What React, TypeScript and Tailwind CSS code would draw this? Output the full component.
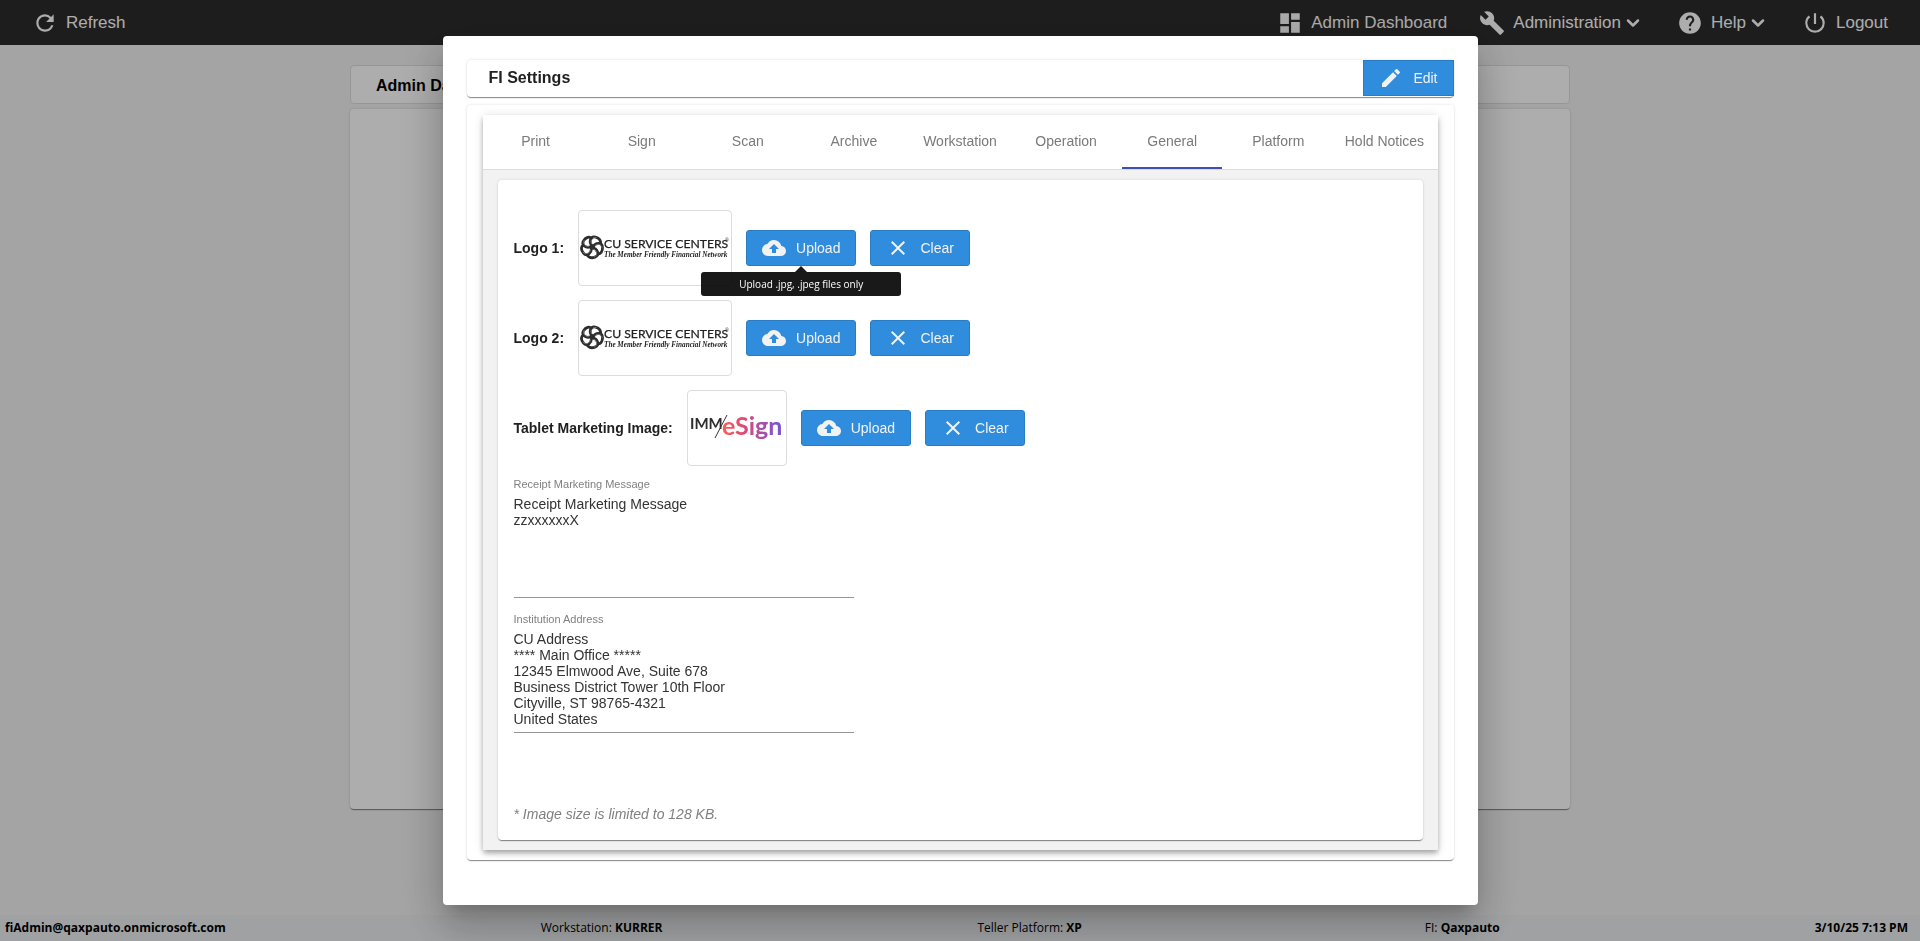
import { ChevronDown } from 'lucide-react';
import { useState } from 'react';
import type { ReactNode } from 'react';
import type { IconType } from 'react-icons';
import {
  MdBuild,
  MdClose,
  MdCloudUpload,
  MdDashboard,
  MdEdit,
  MdHelp,
  MdPowerSettingsNew,
  MdRefresh
} from 'react-icons/md';

const tabs = [
  'Print',
  'Sign',
  'Scan',
  'Archive',
  'Workstation',
  'Operation',
  'General',
  'Platform',
  'Hold Notices'
];

const navItems = [
  { icon: MdDashboard, label: 'Admin Dashboard', menu: false },
  { icon: MdBuild, label: 'Administration', menu: true },
  { icon: MdHelp, label: 'Help', menu: true },
  { icon: MdPowerSettingsNew, label: 'Logout', menu: false }
];

const receiptMessage = 'Receipt Marketing Message\nzzxxxxxxX';

const institutionAddress = [
  'CU Address',
  '**** Main Office *****',
  '12345 Elmwood Ave, Suite 678',
  'Business District Tower 10th Floor',
  'Cityville, ST 98765-4321',
  'United States'
].join('\n');

const cardShadow =
  'shadow-[0_2px_1px_-1px_rgba(0,0,0,0.3),0_1px_1px_0_rgba(0,0,0,0.2),0_0_3px_0_rgba(0,0,0,0.12)]';

function CuServiceLogo() {
  return (
    <svg width="150" height="30" viewBox="0 0 150 30" role="img" aria-label="CU Service Centers">
      <g transform="translate(12 14)" fill="none" strokeLinecap="round">
        {[20, 92, 164, 236, 308].map((angle) => (
          <g key={angle} transform={`rotate(${angle})`}>
            <path d="M0 -1 C-5 -3 -5.500 -10 0 -10.500 C4 -11 7 -8.500 6.500 -6" stroke="#2d2d2d" strokeWidth="2.800" />
            <path d="M-1.500 -3 C-4 -5 -3.500 -9.500 0.500 -10.300" stroke="#9a9a9a" strokeWidth="0.600" />
          </g>
        ))}
      </g>
      <text x="24" y="15" fontFamily="Lato, sans-serif" fontSize="12.200" fill="#222" stroke="#222" strokeWidth="0.250">
        CU SERVICE CENTERS
      </text>
      <text x="145" y="9" fontFamily="'Liberation Sans', sans-serif" fontSize="5" fill="#333">
        ®
      </text>
      <text x="24" y="24" fontFamily="'Liberation Serif', serif" fontSize="7.200" fontStyle="italic" fontWeight="700" fill="#222">
        The Member Friendly Financial Network
      </text>
    </svg>
  );
}

function EsignLogo() {
  return (
    <svg width="96" height="40" viewBox="0 0 96 40" role="img" aria-label="IMM eSign">
      <defs>
        <linearGradient id="esign" gradientUnits="userSpaceOnUse" x1="34" y1="0" x2="94" y2="0">
          <stop offset="0" stopColor="#ff5a55" />
          <stop offset="0.35" stopColor="#dd4a78" />
          <stop offset="0.7" stopColor="#a24fae" />
          <stop offset="1" stopColor="#6f57d8" />
        </linearGradient>
      </defs>
      <text x="1" y="21" fontFamily="Lato, sans-serif" fontSize="15" fontWeight="700" fill="#2d2d2d">
        IMM
      </text>
      <path d="M26 30 L38 7" stroke="#333" strokeWidth="1" />
      <text x="33" y="27" fontFamily="Lato, sans-serif" fontSize="25" fontWeight="700" fill="url(#esign)">
        eSign
      </text>
    </svg>
  );
}

function ActionButton({ icon: Icon, label, square }: { icon: IconType; label: string; square?: boolean }) {
  return (
    <button
      type="button"
      className={`flex h-9 items-center gap-2.5 border border-[#2a7cc2] bg-[#308ddd] px-[15px] text-sm text-[#f2f2f2] hover:bg-[#2a7cc2] ${
        square ? '' : 'rounded-[3px]'
      }`}
    >
      <Icon size={24} />
      {label}
    </button>
  );
}

function ImageRow({ label, tooltip, children }: { label: string; tooltip?: string; children: ReactNode }) {
  return (
    <div className="flex items-center gap-3.5">
      <span className="text-sm font-bold">{label}</span>
      <div className="flex h-[76px] items-center justify-center rounded border border-[#dcdcdc] px-px">
        {children}
      </div>
      <div className="relative">
        <ActionButton icon={MdCloudUpload} label="Upload" />
        {tooltip && (
          <div
            role="tooltip"
            className="absolute top-full left-1/2 z-10 mt-1.5 flex h-6 w-[200px] -translate-x-1/2 items-center justify-center rounded-[3px] bg-black/90 font-['Open_Sans',sans-serif] text-[10px] text-white"
          >
            <span className="absolute bottom-full border-x-[6px] border-b-[6px] border-x-transparent border-b-black/90" />
            {tooltip}
          </div>
        )}
      </div>
      <ActionButton icon={MdClose} label="Clear" />
    </div>
  );
}

function MessageField({ id, label, value }: { id: string; label: string; value: string }) {
  return (
    <div className="flex w-[340px] max-w-full flex-col gap-1">
      <label htmlFor={id} className="text-[11px] leading-4 text-[#808080]">
        {label}
      </label>
      <textarea
        id={id}
        rows={6}
        readOnly
        defaultValue={value}
        className="box-content resize-none overflow-hidden border-b border-[#949494] pb-[5px] text-sm leading-4 text-[#333] outline-none"
      />
    </div>
  );
}

function TopBar() {
  return (
    <header className="flex h-[45px] items-center justify-between bg-[#2c2c2c] px-8 text-[17px] text-white">
      <a href="#refresh" className="flex items-center gap-2">
        <MdRefresh size={26} />
        Refresh
      </a>
      <nav className="flex items-center gap-8">
        {navItems.map(({ icon: Icon, label, menu }) => (
          <a key={label} href="#menu" className="flex items-center">
            <Icon size={26} className="mr-2" />
            {label}
            {menu && <ChevronDown size={20} strokeWidth={3} className="mr-0.5 ml-0.5" />}
          </a>
        ))}
      </nav>
    </header>
  );
}

function StatusBar() {
  return (
    <footer className="flex h-[26px] items-center justify-between bg-[#ebeef0] pr-3 pl-[5px] font-['Open_Sans',sans-serif] text-xs text-black">
      <b>fiAdmin@qaxpauto.onmicrosoft.com</b>
      <span>
        Workstation: <b>KURRER</b>
      </span>
      <span className="pr-7">
        Teller Platform: <b>XP</b>
      </span>
      <span>
        FI: <b>Qaxpauto</b>
      </span>
      <b>3/10/25 7:13 PM</b>
    </footer>
  );
}

function SettingsDialog() {
  const [activeTab, setActiveTab] = useState('General');

  return (
    <div
      role="dialog"
      aria-label="FI Settings"
      className="w-full max-w-[1035px] rounded bg-white px-6 pt-6 pb-[45px] text-[#212121] shadow-[0_11px_15px_-7px_rgba(0,0,0,0.2),0_24px_38px_3px_rgba(0,0,0,0.14),0_9px_46px_8px_rgba(0,0,0,0.12)]"
    >
      <div className={`flex items-start justify-between rounded pb-px pl-[22px] ${cardShadow}`}>
        <h2 className="text-base leading-9 font-bold">FI Settings</h2>
        <ActionButton icon={MdEdit} label="Edit" square />
      </div>

      <div className={`mt-2 rounded px-4 py-2.5 ${cardShadow}`}>
        <div className="bg-[#f2f2f2] shadow-[0_3px_5px_-1px_rgba(0,0,0,0.2),0_4px_5px_0_rgba(0,0,0,0.14),0_1px_10px_0_rgba(0,0,0,0.12)]">
          <div role="tablist" className="flex border-b border-[#dcdcdc] bg-white">
            {tabs.map((tab) => (
              <button
                key={tab}
                type="button"
                role="tab"
                aria-selected={activeTab === tab}
                onClick={() => setActiveTab(tab)}
                className="flex h-[54px] flex-1 basis-0 flex-col items-center px-[3px] text-sm whitespace-nowrap text-[#7a7a7a]"
              >
                <span className="flex flex-1 items-center">{tab}</span>
                <span className={`h-0.5 w-full ${activeTab === tab ? 'bg-[#3f51b5]' : 'bg-transparent'}`} />
              </button>
            ))}
          </div>

          <div className="px-[15px] py-2.5">
            <div className={`rounded bg-white px-4 pt-[30px] pb-4 ${cardShadow}`}>
              <div className="flex flex-col gap-3.5">
                <ImageRow label="Logo 1:" tooltip="Upload .jpg, .jpeg files only">
                  <CuServiceLogo />
                </ImageRow>
                <ImageRow label="Logo 2:">
                  <CuServiceLogo />
                </ImageRow>
                <ImageRow label="Tablet Marketing Image:">
                  <EsignLogo />
                </ImageRow>
              </div>

              <div className="mt-2.5 flex flex-col gap-[13px]">
                <MessageField id="receipt-message" label="Receipt Marketing Message" value={receiptMessage} />
                <MessageField id="institution-address" label="Institution Address" value={institutionAddress} />
              </div>

              <p className="mt-[71px] text-sm text-[#808080] italic">* Image size is limited to 128 KB.</p>
            </div>
          </div>
        </div>
      </div>
    </div>
  );
}

export default function App() {
  return (
    <div className="flex min-h-screen flex-col bg-[#f2f2f2] font-['Liberation_Sans',Arial,sans-serif]">
      <TopBar />

      <main className="mx-auto w-full max-w-[1220px] flex-1 pt-5">
        <h1 className="rounded border border-[#dedede] bg-white px-[25px] pt-0.5 text-base leading-[35px] font-bold text-black">
          Admin Dashboard
        </h1>
        <div className={`mt-[5px] min-h-[700px] rounded bg-white ${cardShadow}`} />
      </main>

      <StatusBar />

      {/* Dialog backdrop */}
      <div className="fixed inset-0 flex items-center justify-center overflow-auto bg-black/32">
        <SettingsDialog />
      </div>
    </div>
  );
}
